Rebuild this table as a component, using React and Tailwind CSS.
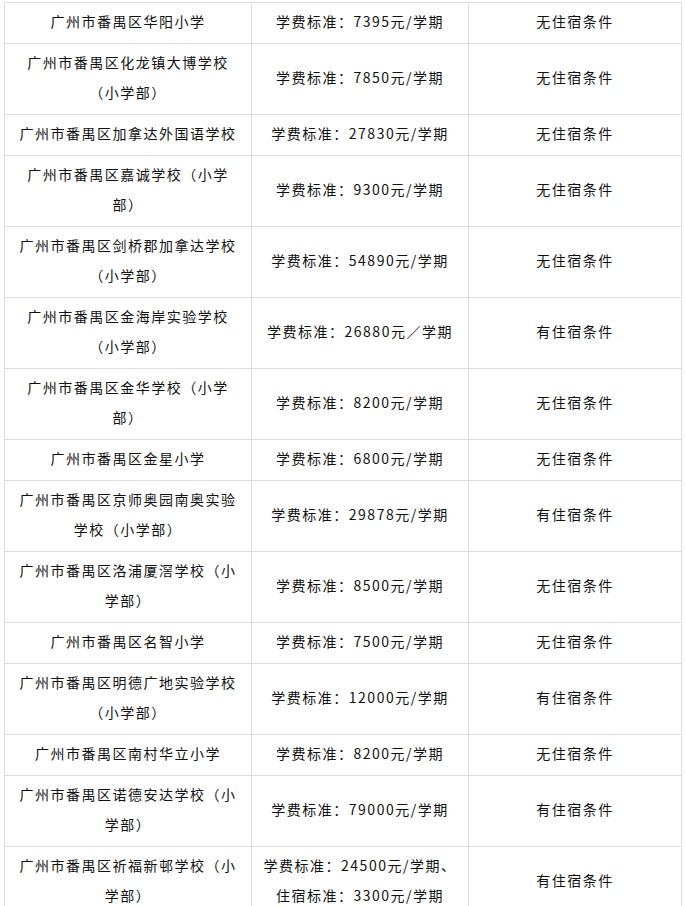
import React from "react";

const rows = [
  [["广州市番禺区华阳小学"], ["学费标准：7395元/学期"], "无住宿条件"],
  [["广州市番禺区化龙镇大博学校", "（小学部）"], ["学费标准：7850元/学期"], "无住宿条件"],
  [["广州市番禺区加拿达外国语学校"], ["学费标准：27830元/学期"], "无住宿条件"],
  [["广州市番禺区嘉诚学校（小学", "部）"], ["学费标准：9300元/学期"], "无住宿条件"],
  [["广州市番禺区剑桥郡加拿达学校", "（小学部）"], ["学费标准：54890元/学期"], "无住宿条件"],
  [["广州市番禺区金海岸实验学校", "（小学部）"], ["学费标准：26880元／学期"], "有住宿条件"],
  [["广州市番禺区金华学校（小学", "部）"], ["学费标准：8200元/学期"], "无住宿条件"],
  [["广州市番禺区金星小学"], ["学费标准：6800元/学期"], "无住宿条件"],
  [["广州市番禺区京师奥园南奥实验", "学校（小学部）"], ["学费标准：29878元/学期"], "有住宿条件"],
  [["广州市番禺区洛浦厦滘学校（小", "学部）"], ["学费标准：8500元/学期"], "无住宿条件"],
  [["广州市番禺区名智小学"], ["学费标准：7500元/学期"], "无住宿条件"],
  [["广州市番禺区明德广地实验学校", "（小学部）"], ["学费标准：12000元/学期"], "有住宿条件"],
  [["广州市番禺区南村华立小学"], ["学费标准：8200元/学期"], "无住宿条件"],
  [["广州市番禺区诺德安达学校（小", "学部）"], ["学费标准：79000元/学期"], "有住宿条件"],
  [["广州市番禺区祈福新邨学校（小", "学部）"], ["学费标准：24500元/学期、", "住宿标准：3300元/学期"], "有住宿条件"],
];

function Lines({ lines }) {
  return lines.map((l, i) => (
    <div key={i} className="whitespace-nowrap">
      {l}
    </div>
  ));
}

export default function App() {
  return (
    <div
      className="bg-white pl-[4px] pt-[2px] h-[906px] overflow-hidden text-[14px] leading-[30px] tracking-[1.5px] text-[#111111]"
      style={{ fontFamily: '"Noto Sans CJK SC", "Noto Sans", sans-serif' }}
    >
      <table className="table-fixed border-collapse w-[677px]">
        <colgroup>
          <col className="w-[247px]" />
          <col className="w-[217px]" />
          <col className="w-[213px]" />
        </colgroup>
        <tbody>
          {rows.map((r, i) => (
            <tr key={i}>
              <td className="border border-[#dddddd] pt-[3px] pb-[7px] px-[8px] text-center align-middle">
                <Lines lines={r[0]} />
              </td>
              <td className="border border-[#dddddd] pt-[3px] pb-[7px] px-[8px] text-center align-middle">
                <Lines lines={r[1]} />
              </td>
              <td className="border border-[#dddddd] pt-[3px] pb-[7px] px-[8px] text-center align-middle">
                {r[2]}
              </td>
            </tr>
          ))}
        </tbody>
      </table>
    </div>
  );
}
